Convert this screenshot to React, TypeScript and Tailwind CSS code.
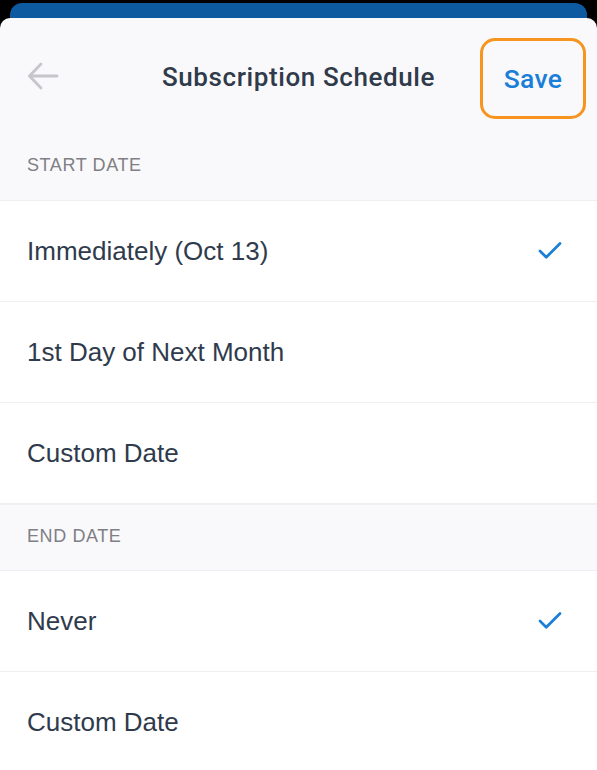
import { Check } from "lucide-react";

const font = { fontFamily: '"Liberation Sans", Arial, sans-serif' };
const medium = { fontFamily: 'Roboto, "Liberation Sans", sans-serif' };

type Option = { label: string; checked?: boolean };

const startOptions: Option[] = [
  { label: "Immediately (Oct 13)", checked: true },
  { label: "1st Day of Next Month" },
  { label: "Custom Date" },
];

const endOptions: Option[] = [{ label: "Never", checked: true }, { label: "Custom Date" }];

const SectionLabel = ({ text, first }: { text: string; first?: boolean }) => (
  <div
    className={`flex items-center border-b border-[#efeff2] bg-[#f9f9fb] px-[27px] ${
      first ? "h-[66px] pb-[5px]" : "h-[67px] border-t pb-[2px]"
    }`}
  >
    <span className="text-[18px] tracking-[0.6px] text-[#7f7f84]">{text}</span>
  </div>
);

const Row = ({ option }: { option: Option }) => (
  <div className="flex h-[101px] items-center justify-between border-b border-[#efeff2] bg-white pl-[27px] pr-[32px]">
    <span className="text-[26px] text-[#2f3b4c]">{option.label}</span>
    {option.checked && <Check className="h-[30px] w-[30px] text-[#1b7fd8]" strokeWidth={2.2} />}
  </div>
);

export default function App() {
  return (
    <div className="h-[770px] overflow-hidden bg-black pt-[3px]" style={font}>
      <div className="mx-[10px] h-[15px] rounded-t-[12px] bg-[#0d5aa0]" />
      <div className="rounded-t-[10px] bg-[#f9f9fb]">
        {/* header */}
        <div className="relative flex h-[117px] items-center justify-center pt-[1px]">
          <button className="absolute left-[26px] top-[43px] text-[#c6c6cb]">
            <svg width="34" height="30" viewBox="0 0 34 30" fill="none" stroke="currentColor" strokeWidth="2.8" strokeLinecap="round" strokeLinejoin="round">
              <path d="M31 15H4" />
              <path d="M15 3L3.5 15L15 27" />
            </svg>
          </button>
          <h1 className="text-[26px] font-medium tracking-[0.6px] text-[#2f3a4a]" style={medium}>
            Subscription Schedule
          </h1>
          <div className="absolute right-[11px] top-[20px] flex h-[81px] w-[106px] items-center justify-center rounded-[15px] border-[3px] border-[#f7941f]">
            <span className="text-[26.5px] font-medium tracking-[0.3px] text-[#1b7fd8]" style={medium}>
              Save
            </span>
          </div>
        </div>

        <SectionLabel text="START DATE" first />
        {startOptions.map((o) => (
          <Row key={o.label} option={o} />
        ))}
        <SectionLabel text="END DATE" />
        {endOptions.map((o) => (
          <Row key={o.label} option={o} />
        ))}
      </div>
    </div>
  );
}
